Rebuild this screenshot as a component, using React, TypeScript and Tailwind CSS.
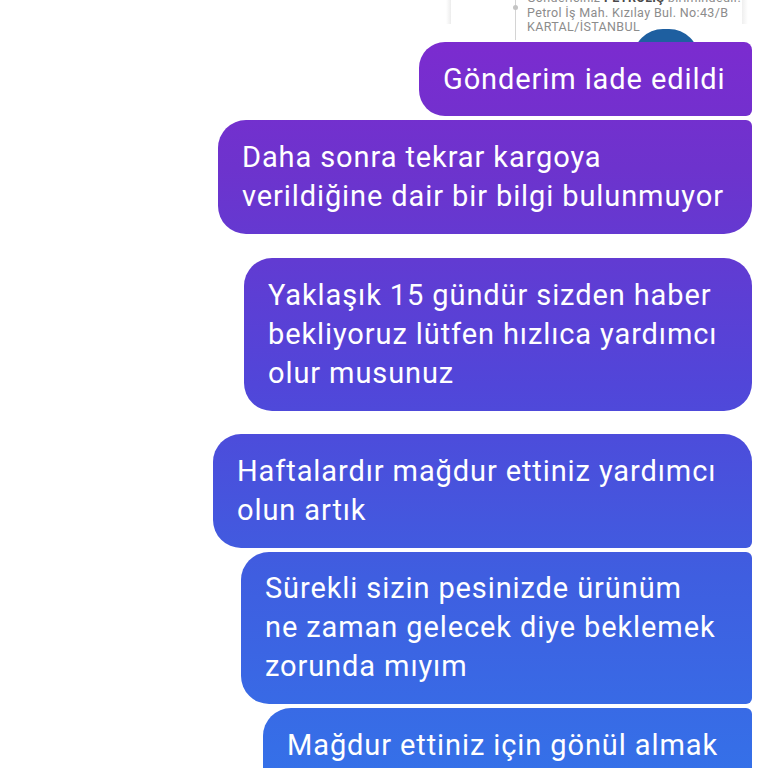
import React from "react";

type Bubble = {
    lines: string[];
    width: number;
    corners: string;
    gap: string;
};

// big radius on the left, the right side depends on where the bubble sits in its group
const bubbles: Bubble[] = [
    {
        lines: ["Gönderim iade edildi"],
        width: 333,
        corners: "rounded-l-[26px] rounded-tr-[8px] rounded-br-[6px]",
        gap: "mt-0 py-[17.5px]",
    },
    {
        lines: ["Daha sonra tekrar kargoya", "verildiğine dair bir bilgi bulunmuyor"],
        width: 534,
        corners: "rounded-l-[28px] rounded-tr-[6px] rounded-br-[28px]",
        gap: "mt-1 py-[18px]",
    },
    {
        lines: ["Yaklaşık 15 gündür sizden haber", "bekliyoruz lütfen hızlıca yardımcı", "olur musunuz"],
        width: 508,
        corners: "rounded-[28px]",
        gap: "mt-[23.5px] py-[18px]",
    },
    {
        lines: ["Haftalardır mağdur ettiniz yardımcı", "olun artık"],
        width: 539,
        corners: "rounded-l-[28px] rounded-tr-[28px] rounded-br-[6px]",
        gap: "mt-[23px] py-[18px]",
    },
    {
        lines: ["Sürekli sizin pesinizde ürünüm", "ne zaman gelecek diye beklemek", "zorunda mıyım"],
        width: 511,
        corners: "rounded-l-[28px] rounded-r-[6px]",
        gap: "mt-1 py-[17.5px]",
    },
    {
        lines: ["Mağdur ettiniz için gönül almak", "yerine hâlâ cevap bile vermiyorsunuz"],
        width: 489,
        corners: "rounded-l-[28px] rounded-r-[6px]",
        gap: "mt-1 py-[18px]",
    },
];

// cropped bottom of the cargo tracking screenshot sent earlier
function ShippingSnippet() {
    return (
        <div className="relative mr-4 ml-auto flex h-[42px] w-[312px] overflow-hidden bg-white">
            <div className="ml-[6px] h-[24px] w-[5px] bg-gradient-to-r from-transparent to-[#ececec]" />
            <div className="relative ml-[64px] h-[40px] w-px bg-[#d4d4d4]">
                <div className="absolute -left-[2px] top-[5px] h-[5px] w-[5px] rounded-full bg-[#c4c4c4]" />
            </div>
            <div className="-mt-[9px] ml-[11px] flex flex-col text-[12.5px] leading-[14.5px] tracking-[0.35px] text-[#8c8c8c] whitespace-nowrap">
                <span>
                    Göndericiniz <b className="text-[#4a4a4a]">PETROLİŞ</b> birimindedir.
                </span>
                <span>Petrol İş Mah. Kızılay Bul. No:43/B</span>
                <span>KARTAL/İSTANBUL</span>
            </div>
            <div className="absolute right-[4px] top-0 h-[24px] w-[6px] bg-gradient-to-l from-transparent to-[#efefef]" />
            <div className="absolute left-[193px] top-[29px] h-[60px] w-[66px] rounded-full bg-[#1e5fa0]" />
        </div>
    );
}

export default function App() {
    return (
        <div
            className="h-[768px] w-[768px] overflow-hidden bg-white select-none"
            style={{ fontFamily: "Roboto, 'Noto Sans', sans-serif" }}
        >
            <ShippingSnippet />
            <div className="flex flex-col items-end pr-4">
                {bubbles.map((b, i) => (
                    <div
                        key={i}
                        className={`${b.gap} ${b.corners} bg-[linear-gradient(180deg,#8029d0_0%,#6d33cd_22%,#5146d9_50%,#3f5ee0_75%,#3570e8_100%)] bg-fixed px-6 text-[29px] leading-[39px] tracking-[0.9px] text-white whitespace-nowrap`}
                        style={{ width: b.width }}
                    >
                        {b.lines.map((l, j) => (
                            <div key={j}>{l}</div>
                        ))}
                    </div>
                ))}
            </div>
        </div>
    );
}
